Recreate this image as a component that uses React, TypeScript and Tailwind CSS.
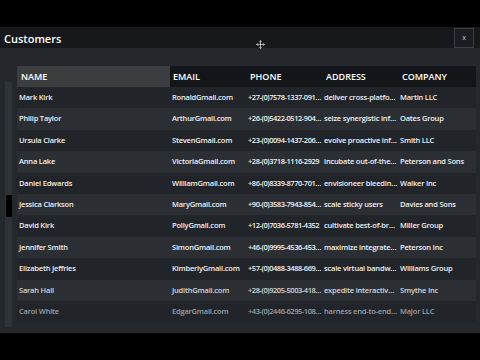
import { Move } from 'lucide-react';

interface Customer {
  name: string;
  email: string;
  phone: string;
  address: string;
  company: string;
}

const customers: Customer[] = [
  { name: 'Mark Kirk', email: 'RonaldGmail.com', phone: '+27-(0)7578-1337-0915 x21', address: 'deliver cross-platform niches', company: 'Martin LLC' },
  { name: 'Philip Taylor', email: 'ArthurGmail.com', phone: '+26-(0)5422-0512-9044 x3', address: 'seize synergistic infomediaries', company: 'Oates Group' },
  { name: 'Ursula Clarke', email: 'StevenGmail.com', phone: '+23-(0)0094-1437-2061 x7', address: 'evolve proactive infrastructures', company: 'Smith LLC' },
  { name: 'Anna Lake', email: 'VictoriaGmail.com', phone: '+28-(0)3718-1116-2929', address: 'incubate out-of-the-box models', company: 'Peterson and Sons' },
  { name: 'Daniel Edwards', email: 'WilliamGmail.com', phone: '+86-(0)8339-8770-7012 x5', address: 'envisioneer bleeding-edge ROI', company: 'Walker Inc' },
  { name: 'Jessica Clarkson', email: 'MaryGmail.com', phone: '+90-(0)3583-7943-8541 x9', address: 'scale sticky users', company: 'Davies and Sons' },
  { name: 'David Kirk', email: 'PollyGmail.com', phone: '+12-(0)7036-5781-4352', address: 'cultivate best-of-breed schemas', company: 'Miller Group' },
  { name: 'Jennifer Smith', email: 'SimonGmail.com', phone: '+46-(0)9995-4536-4537 x2', address: 'maximize integrated platforms', company: 'Peterson Inc' },
  { name: 'Elizabeth Jeffries', email: 'KimberlyGmail.com', phone: '+57-(0)0488-3488-6690 x4', address: 'scale virtual bandwidth', company: 'Williams Group' },
  { name: 'Sarah Hall', email: 'JudithGmail.com', phone: '+28-(0)9205-5003-4182 x8', address: 'expedite interactive synergies', company: 'Smythe Inc' },
  { name: 'Carol White', email: 'EdgarGmail.com', phone: '+43-(0)2446-6295-1088 x1', address: 'harness end-to-end markets', company: 'Major LLC' },
];

const font = { fontFamily: '"Open Sans", "Noto Sans", sans-serif' };

export default function App() {
  return (
    <div className="flex h-[360px] w-[480px] flex-col overflow-hidden bg-black text-[#e6e8ea]" style={font}>
      <div className="h-[27px] shrink-0" />

      {/* Title bar */}
      <div className="relative flex h-[21px] shrink-0 items-center justify-between bg-[#16181b]">
        <span className="pl-[4px] pt-[1px] text-[11px] font-semibold leading-none text-white">Customers</span>
        <Move size={9} strokeWidth={2} className="absolute left-[256px] top-[13px] text-[#d8d8d8]" />
        <button className="mr-[6px] flex h-[20px] w-[20px] items-center justify-center border border-[#3a3e42] bg-[#1b1d20] text-[7px] leading-none text-[#c8c8c8]">
          x
        </button>
      </div>

      {/* Body */}
      <div className="flex h-[285px] shrink-0 bg-[#24282c]">
        {/* Scrollbar */}
        <div className="ml-[5px] w-[7px] shrink-0 pt-[34px]">
          <div className="h-[245px] bg-[#2e3337] pt-[113px]">
            <div className="ml-[1px] h-[22px] w-[6px] bg-black" />
          </div>
        </div>

        {/* Table */}
        <div className="ml-[5px] w-[459px] pt-[18px]">
          <div className="flex h-[21px] bg-[#131518] text-[9px] font-semibold text-white">
            <div className="flex w-[153px] items-center bg-[#3b3d3f] pl-[4px]">NAME</div>
            <div className="flex w-[77px] items-center pl-[3px]">EMAIL</div>
            <div className="flex w-[76px] items-center pl-[3px]">PHONE</div>
            <div className="flex w-[76px] items-center pl-[3px]">ADDRESS</div>
            <div className="flex w-[77px] items-center pl-[3px]">COMPANY</div>
          </div>

          {customers.map((c, i) => {
            const bg = i % 2 === 1 ? 'bg-[#2b2f33]' : 'bg-[#212428]';
            const tone =
              i === customers.length - 1
                ? 'text-[#9ca0a4]'
                : i === customers.length - 2
                  ? 'text-[#d2d5d8]'
                  : 'text-[#eef0f2]';
            return (
              <div
                key={c.name}
                className={`flex h-[21.4px] items-center text-[7.5px] font-semibold tracking-[-0.2px] ${bg} ${tone}`}
              >
                <div className="w-[153px] truncate pl-[2px]">{c.name}</div>
                <div className="w-[77px] truncate pl-[2px] pr-[2px]">{c.email}</div>
                <div className="w-[76px] truncate pl-[1px] pr-[1px] tracking-[-0.45px]">{c.phone}</div>
                <div className="w-[76px] truncate pl-[1px] pr-[1px]">{c.address}</div>
                <div className="w-[77px] truncate pl-[1px]">{c.company}</div>
              </div>
            );
          })}
        </div>
      </div>
    </div>
  );
}
